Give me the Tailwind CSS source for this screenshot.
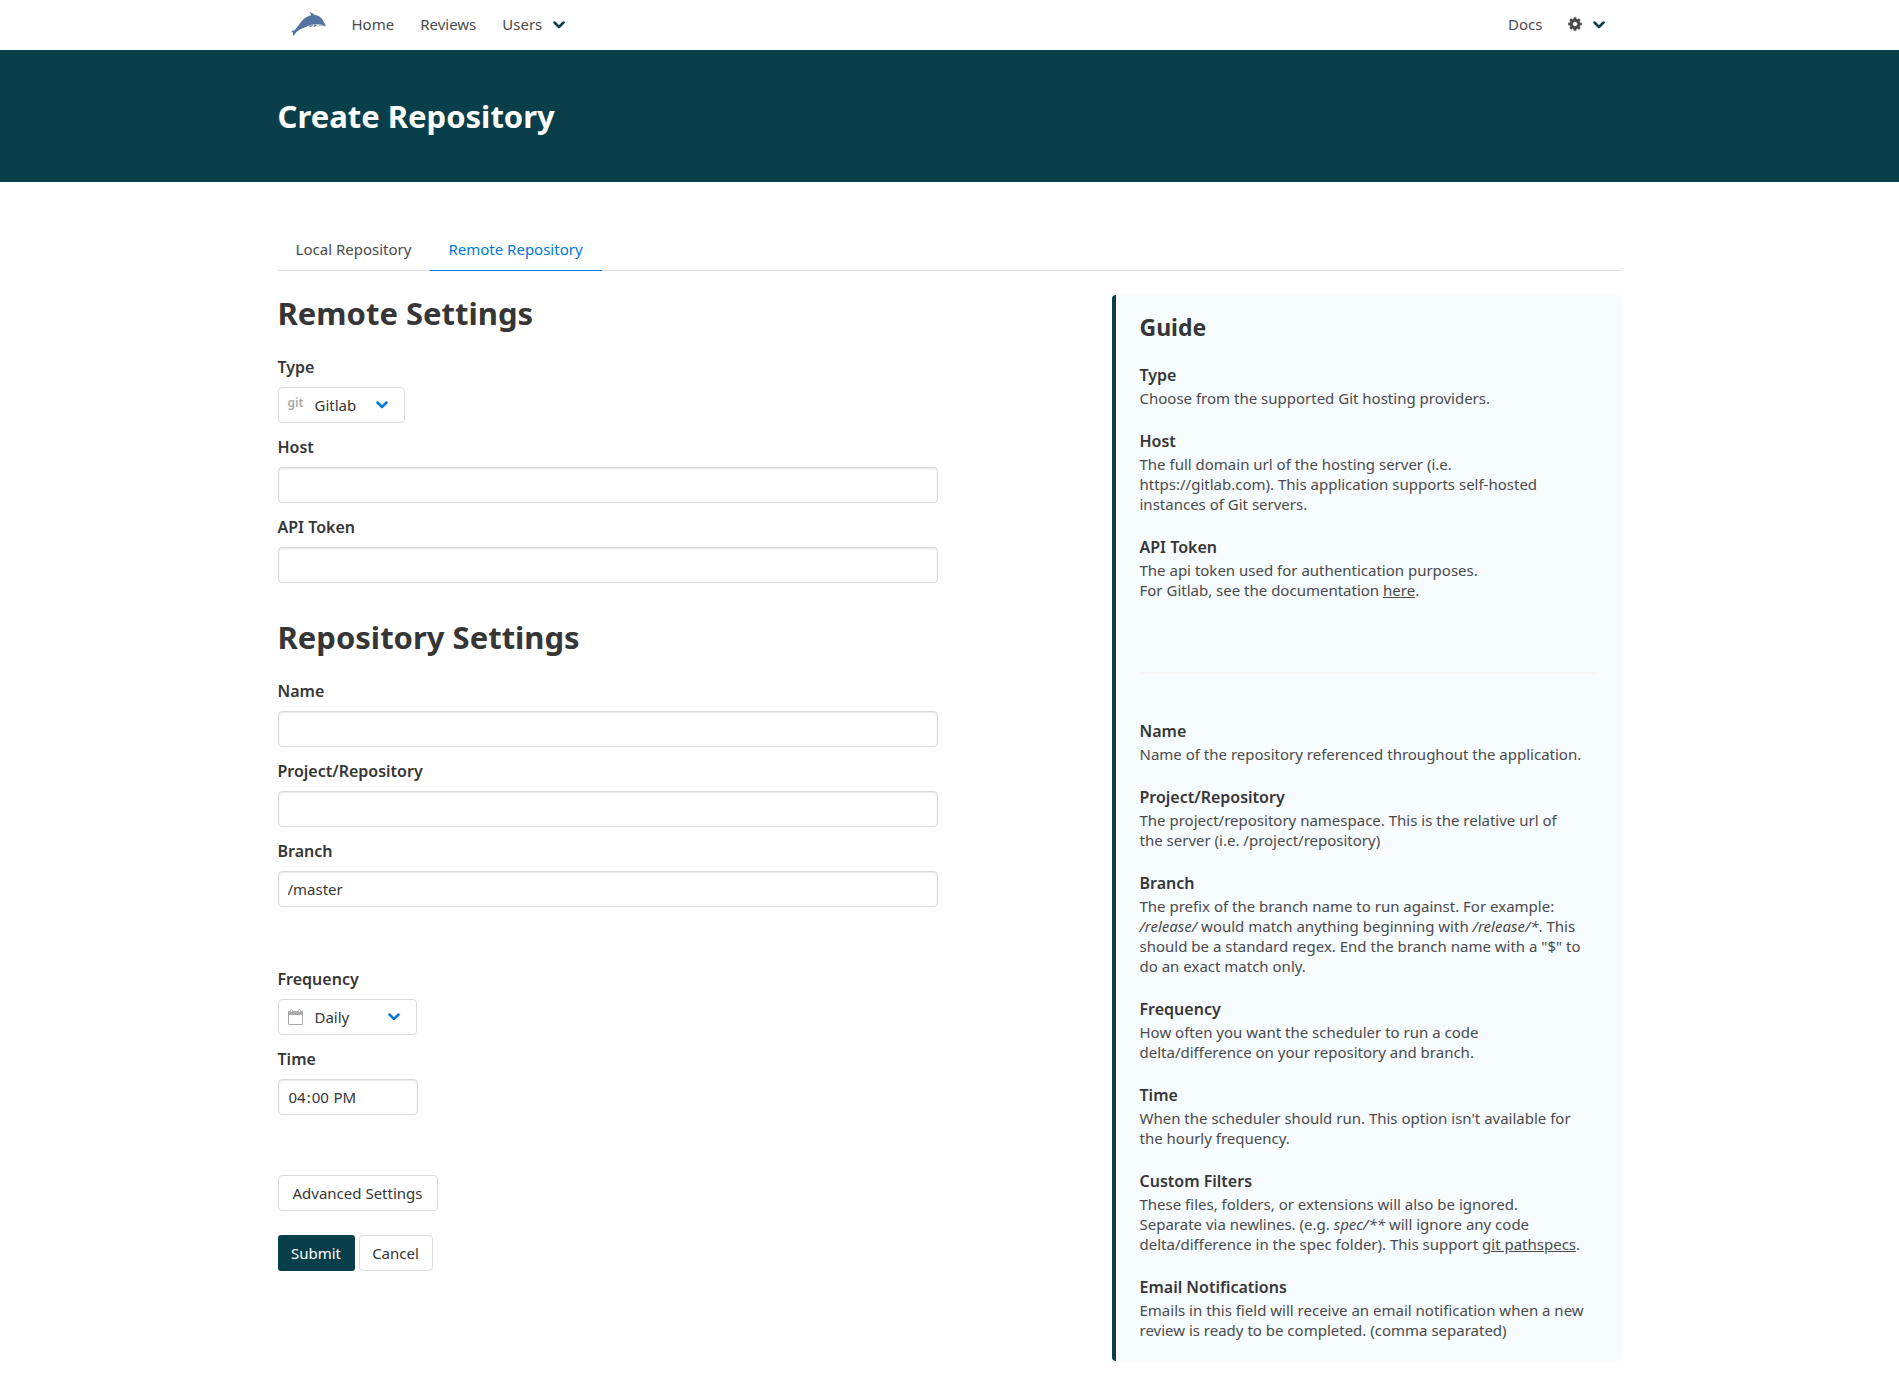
<!DOCTYPE html>
<html lang="en">
<head>
<meta charset="utf-8">
<meta name="viewport" content="width=device-width, initial-scale=1">
<title>Create Repository</title>
<script src="https://cdn.jsdelivr.net/npm/@tailwindcss/browser@4"></script>
</head>
<body class="min-h-screen bg-white font-['Noto_Sans',sans-serif] text-[15px] leading-6 text-[#4a4a4a]">

<nav class="mx-auto flex h-[50px] max-w-[1344px] items-stretch justify-between pb-0.5" aria-label="Main">
  <div class="flex gap-0.5">
    <a href="#" class="flex items-center px-3" aria-label="Dashboard">
      <svg class="h-6 w-9" viewBox="0 0 38 24" preserveAspectRatio="none">
        <path fill="#54749f" d="M1 18.5C2.500 18.800 4 18.800 5.300 17.800C8 15 10 11.500 13.500 8C16 5.500 19 3.900 22.300 3.200C22.200 2 21.500 1 20.600 0.200C22.800 0.500 24.800 1.600 25.900 3.100C30 3.300 34.300 5.800 35.400 10C36.300 10.800 37.300 12 37.500 13.400C37.300 14.300 36 14.400 34.500 14C32.500 13.300 30.500 12.800 28.500 12.900C27.700 13.900 26.500 14.600 25 14.900C25.300 14.200 25.500 13.700 25.500 13.100L24 13.400C23 14.500 21.800 15 20.300 15.200C20.900 14.600 21.300 14.100 21.500 13.600C16.500 15 11.500 16.700 7.800 19.200C7 19.900 6.400 20.500 5.900 21C5.500 22 4.500 23.200 3 23.900C3.200 22.700 3.100 21.700 3 20.700C2.500 19.800 1.700 19.100 1 18.500Z"/>
        <path fill="#b4c1d3" d="M18 14C22 12.300 27 11.600 31.500 12.300C33.500 12.700 35.500 13.500 37.200 13.700C36 14.500 34.500 14 33 13.500C29 12.600 24 12.900 20.500 13.700Z"/>
      </svg>
    </a>
    <a href="#" class="flex items-center px-3">Home</a>
    <a href="#" class="flex items-center px-3">Reviews</a>
    <button type="button" class="flex items-center gap-[11px] px-3">Users
      <svg class="mt-0.5 h-2 w-3" viewBox="0 0 12 8" fill="none" stroke="#073f4a" stroke-width="2.5" stroke-linecap="round" stroke-linejoin="round"><path d="M1.500 1.500 6 6 10.500 1.500"/></svg>
    </button>
  </div>
  <div class="flex">
    <a href="#" class="flex items-center px-3">Docs</a>
    <button type="button" class="flex items-center gap-2.5 pr-[17px] pl-3" aria-label="Settings">
      <svg class="size-4" viewBox="0 0 1792 1792" fill="#4a4a4a"><path d="M1152 896q0-106-75-181t-181-75-181 75-75 181 75 181 181 75 181-75 75-181zm512-109v222q0 12-8 23t-20 13l-185 28q-19 54-39 91 35 50 107 138 10 12 10 25t-9 23q-27 37-99 108t-94 71q-12 0-26-9l-138-108q-44 23-91 38-16 136-29 186-7 28-36 28h-222q-14 0-24.500-8.500t-11.500-21.500l-28-184q-49-16-90-37l-141 107q-10 9-25 9-14 0-25-11-126-114-165-168-7-10-7-23 0-12 8-23 15-21 51-66.500t54-70.500q-27-50-41-99l-183-27q-13-2-21-12.500t-8-23.500v-222q0-12 8-23t19-13l186-28q14-46 39-92-40-57-107-138-10-12-10-24 0-10 9-23 26-36 98.500-107.500t94.500-71.500q13 0 26 10l138 107q44-23 91-38 16-136 29-186 7-28 36-28h222q14 0 24.500 8.500t11.500 21.500l28 184q49 16 90 37l142-107q9-9 24-9 13 0 25 10 129 119 165 170 7 8 7 22 0 12-8 23-15 21-51 66.500t-54 70.500q26 50 41 98l183 28q13 2 21 12.500t8 23.500z"/></svg>
      <svg class="mt-0.5 h-2 w-3" viewBox="0 0 12 8" fill="none" stroke="#073f4a" stroke-width="2.5" stroke-linecap="round" stroke-linejoin="round"><path d="M1.500 1.500 6 6 10.500 1.500"/></svg>
    </button>
  </div>
</nav>

<header class="bg-[#083f4a]">
  <div class="mx-auto max-w-[1344px] py-12">
    <h1 class="text-[31px] leading-9 font-bold text-white">Create Repository</h1>
  </div>
</header>

<main class="mx-auto max-w-[1344px] py-12">
  <div class="mb-6 flex h-[41px] border-b border-[#dbdbdb]">
    <a href="#" class="-mb-px flex w-38 items-center justify-center border-b border-[#dbdbdb] pb-0.5">Local Repository</a>
    <a href="#" class="-mb-px flex w-43 items-center justify-center border-b border-[#0078d9] pb-0.5 text-[#0078d9]" aria-current="page">Remote Repository</a>
  </div>

  <div class="flex flex-col items-start gap-12 lg:flex-row lg:justify-between">
    <form class="w-full max-w-[660px]">
      <h2 class="mb-6 text-[31px] leading-9 font-bold text-[#363636]">Remote Settings</h2>
      <div class="flex flex-col gap-3">
        <div>
          <label for="type" class="mb-2 block text-base font-semibold text-[#363636]">Type</label>
          <div class="relative h-9 w-[127px]">
            <select id="type" class="h-full w-full appearance-none rounded border border-[#dbdbdb] bg-white pl-9 text-[#363636]"><option>Gitlab</option></select>
            <span class="pointer-events-none absolute inset-y-0 left-2.5 flex items-center pb-1 text-xs font-semibold text-[#aaa]" aria-hidden="true">git</span>
            <svg class="pointer-events-none absolute top-3.5 right-[17px] h-2 w-3" viewBox="0 0 12 8" fill="none" stroke="#0078d9" stroke-width="2.5" stroke-linecap="round" stroke-linejoin="round"><path d="M1.500 1.500 6 6 10.500 1.500"/></svg>
          </div>
        </div>
        <div>
          <label for="host" class="mb-2 block text-base font-semibold text-[#363636]">Host</label>
          <input id="host" type="text" class="block h-9 w-full rounded border border-[#dbdbdb] px-[9px] text-[#363636] shadow-[inset_0_1px_2px_rgba(10,10,10,0.1)]">
        </div>
        <div>
          <label for="token" class="mb-2 block text-base font-semibold text-[#363636]">API Token</label>
          <input id="token" type="text" class="block h-9 w-full rounded border border-[#dbdbdb] px-[9px] text-[#363636] shadow-[inset_0_1px_2px_rgba(10,10,10,0.1)]">
        </div>
      </div>

      <h2 class="mt-9 mb-6 text-[31px] leading-9 font-bold text-[#363636]">Repository Settings</h2>
      <div class="flex flex-col gap-3">
        <div>
          <label for="name" class="mb-2 block text-base font-semibold text-[#363636]">Name</label>
          <input id="name" type="text" class="block h-9 w-full rounded border border-[#dbdbdb] px-[9px] text-[#363636] shadow-[inset_0_1px_2px_rgba(10,10,10,0.1)]">
        </div>
        <div>
          <label for="project" class="mb-2 block text-base font-semibold text-[#363636]">Project/Repository</label>
          <input id="project" type="text" class="block h-9 w-full rounded border border-[#dbdbdb] px-[9px] text-[#363636] shadow-[inset_0_1px_2px_rgba(10,10,10,0.1)]">
        </div>
        <div>
          <label for="branch" class="mb-2 block text-base font-semibold text-[#363636]">Branch</label>
          <input id="branch" type="text" value="/master" class="block h-9 w-full rounded border border-[#dbdbdb] px-[9px] text-[#363636] shadow-[inset_0_1px_2px_rgba(10,10,10,0.1)]">
        </div>
      </div>

      <div class="my-15 flex flex-col gap-3">
        <div>
          <label for="frequency" class="mb-2 block text-base font-semibold text-[#363636]">Frequency</label>
          <div class="relative h-9 w-[139px]">
            <select id="frequency" class="h-full w-full appearance-none rounded border border-[#dbdbdb] bg-white pl-9 text-[#363636]"><option>Daily</option></select>
            <svg class="pointer-events-none absolute top-2.5 left-2.5 h-4 w-[15px]" viewBox="0 0 15 16" fill="none" stroke="#aaa"><rect x="0.500" y="2.500" width="14" height="13" rx="0.500"/><path fill="#aaa" stroke="none" d="M0 2h15v4H0z"/><rect x="2.500" y="0.500" width="2" height="3" rx="1" fill="#fff"/><rect x="10.500" y="0.500" width="2" height="3" rx="1" fill="#fff"/></svg>
            <svg class="pointer-events-none absolute top-3.5 right-[17px] h-2 w-3" viewBox="0 0 12 8" fill="none" stroke="#0078d9" stroke-width="2.5" stroke-linecap="round" stroke-linejoin="round"><path d="M1.500 1.500 6 6 10.500 1.500"/></svg>
          </div>
        </div>
        <div>
          <label for="time" class="mb-2 block text-base font-semibold text-[#363636]">Time</label>
          <input id="time" type="time" value="16:00" class="block h-9 w-35 rounded border border-[#dbdbdb] px-[9px] text-[#363636] shadow-[inset_0_1px_2px_rgba(10,10,10,0.1)] [&::-webkit-calendar-picker-indicator]:hidden">
        </div>
      </div>

      <button type="button" class="mb-6 block h-9 w-40 rounded border border-[#dbdbdb] text-[#363636]">Advanced Settings</button>
      <div class="flex gap-1">
        <button type="submit" class="h-9 w-[77px] rounded-[3px] bg-[#083f4a] text-white">Submit</button>
        <button type="button" class="h-9 w-[74px] rounded border border-[#dbdbdb] text-[#363636]">Cancel</button>
      </div>
    </form>

    <aside class="w-full rounded border-l-4 border-[#083f4a] bg-[#f6fbfe] px-6 pt-[19px] pb-[21px] leading-5 lg:w-[510px]">
      <h3 class="mb-6 text-[23px] leading-[26px] font-bold text-[#363636]">Guide</h3>
      <dl class="flex flex-col gap-[22px]">
        <div>
          <dt class="mb-0.5 text-base leading-[22px] font-semibold text-[#363636]">Type</dt>
          <dd>Choose from the supported Git hosting providers.</dd>
        </div>
        <div>
          <dt class="mb-0.5 text-base leading-[22px] font-semibold text-[#363636]">Host</dt>
          <dd>The full domain url of the hosting server (i.e.<br>https://gitlab.com). This application supports self-hosted<br>instances of Git servers.</dd>
        </div>
        <div>
          <dt class="mb-0.5 text-base leading-[22px] font-semibold text-[#363636]">API Token</dt>
          <dd>The api token used for authentication purposes.<br>For Gitlab, see the documentation <a href="#" class="underline">here</a>.</dd>
        </div>
      </dl>
      <hr class="mt-18 mb-[46px] h-0.5 border-0 bg-[#f5f5f5]">
      <dl class="flex flex-col gap-[22px]">
        <div>
          <dt class="mb-0.5 text-base leading-[22px] font-semibold text-[#363636]">Name</dt>
          <dd>Name of the repository referenced throughout the application.</dd>
        </div>
        <div>
          <dt class="mb-0.5 text-base leading-[22px] font-semibold text-[#363636]">Project/Repository</dt>
          <dd>The project/repository namespace. This is the relative url of<br>the server (i.e. /project/repository)</dd>
        </div>
        <div>
          <dt class="mb-0.5 text-base leading-[22px] font-semibold text-[#363636]">Branch</dt>
          <dd>The prefix of the branch name to run against. For example:<br><em>/release/</em> would match anything beginning with <em>/release/*</em>. This<br>should be a standard regex. End the branch name with a "$" to<br>do an exact match only.</dd>
        </div>
        <div>
          <dt class="mb-0.5 text-base leading-[22px] font-semibold text-[#363636]">Frequency</dt>
          <dd>How often you want the scheduler to run a code<br>delta/difference on your repository and branch.</dd>
        </div>
        <div>
          <dt class="mb-0.5 text-base leading-[22px] font-semibold text-[#363636]">Time</dt>
          <dd>When the scheduler should run. This option isn't available for<br>the hourly frequency.</dd>
        </div>
        <div>
          <dt class="mb-0.5 text-base leading-[22px] font-semibold text-[#363636]">Custom Filters</dt>
          <dd>These files, folders, or extensions will also be ignored.<br>Separate via newlines. (e.g. <em>spec/**</em> will ignore any code<br>delta/difference in the spec folder). This support <a href="#" class="underline">git pathspecs</a>.</dd>
        </div>
        <div>
          <dt class="mb-0.5 text-base leading-[22px] font-semibold text-[#363636]">Email Notifications</dt>
          <dd>Emails in this field will receive an email notification when a new<br>review is ready to be completed. (comma separated)</dd>
        </div>
      </dl>
    </aside>
  </div>
</main>
</body>
</html>
